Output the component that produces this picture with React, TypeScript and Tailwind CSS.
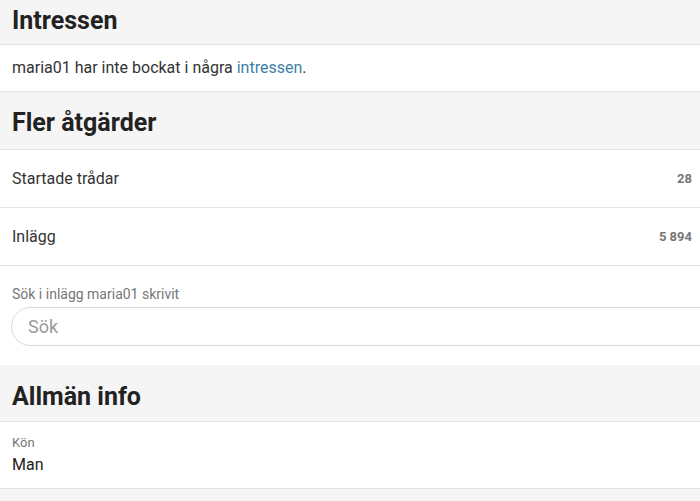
import React from 'react';

const font = { fontFamily: 'Roboto, "Noto Sans", sans-serif' };

const SectionHeader: React.FC<{ title: string; className?: string }> = ({ title, className = '' }) => (
  <div className={`flex items-center bg-[#f5f5f5] border-b border-[#e4e4e4] px-3 ${className}`}>
    <h2 className="text-[25px] font-bold leading-none text-[#222]">{title}</h2>
  </div>
);

const StatRow: React.FC<{ label: string; value: string }> = ({ label, value }) => (
  <div className="flex h-[58px] items-center justify-between border-b border-[#e4e4e4] pl-3 pr-2">
    <span className="text-[16px] text-[#333]">{label}</span>
    <span className="text-[13px] font-bold text-[#777]">{value}</span>
  </div>
);

export default function App() {
  return (
    <div className="h-[501px] w-[700px] overflow-hidden bg-white" style={font}>
      <SectionHeader title="Intressen" className="h-[45px] pb-[3px]" />
      <div className="flex h-[47px] items-center border-b border-[#e4e4e4] px-3 text-[16px] text-[#333]">
        <p>
          maria01 har inte bockat i några <a className="text-[#3d7fa6]">intressen</a>.
        </p>
      </div>

      <SectionHeader title="Fler åtgärder" className="h-[58px] border-t border-t-[#f0f0f0] pt-[3px]" />
      <StatRow label="Startade trådar" value="28" />
      <StatRow label="Inlägg" value="5 894" />

      <div className="flex h-[99px] flex-col px-[11px] pt-[20px]">
        <label className="pl-px text-[14px] leading-[16px] text-[#777]">Sök i inlägg maria01 skrivit</label>
        <div className="mt-[5px] flex h-[39px] w-[720px] items-center rounded-full border border-[#d9d9d9] px-4">
          <input
            className="w-full bg-transparent text-[18px] text-[#333] outline-none placeholder:text-[#9a9a9a]"
            placeholder="Sök"
          />
        </div>
      </div>

      <SectionHeader title="Allmän info" className="h-[57px] pt-[7px]" />
      <div className="flex h-[67px] flex-col border-b border-[#e4e4e4] px-3 pt-[12px]">
        <span className="text-[13px] leading-[18px] text-[#777]">Kön</span>
        <span className="text-[16px] leading-[26px] text-[#222]">Man</span>
      </div>
      <div className="h-[20px] bg-[#f5f5f5]" />
    </div>
  );
}
